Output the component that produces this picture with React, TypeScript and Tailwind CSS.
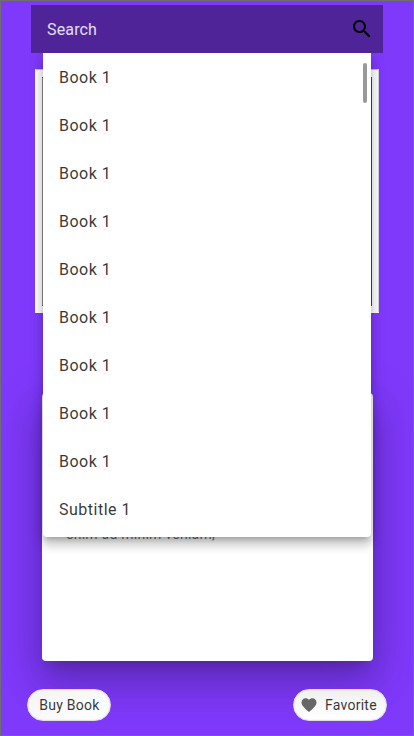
const books = Array.from({ length: 9 }, () => "Book 1");
const results = [...books, "Subtitle 1"];

function SearchBar() {
  return (
    <div className="relative z-10 ml-[30px] flex h-12 w-[352px] items-center justify-between bg-[#4f2499] pl-4 pr-[9px]">
      <span className="pt-0.5 text-base tracking-[0.15px] text-white/85">Search</span>
      <svg viewBox="0 0 24 24" className="h-6 w-6 fill-black">
        <path d="M15.5 14h-.79l-.28-.27C15.41 12.59 16 11.11 16 9.5 16 5.91 13.09 3 9.5 3S3 5.91 3 9.5 5.91 16 9.5 16c1.61 0 3.09-.59 4.23-1.57l.27.28v.79l5 4.99L20.49 19l-4.99-5zm-6 0C7.01 14 5 11.99 5 9.5S7.01 5 9.5 5 14 7.01 14 9.5 11.99 14 9.5 14z" />
      </svg>
      <Results />
    </div>
  );
}

function Results() {
  return (
    <div className="absolute left-3 top-12 h-[484px] w-[328px] rounded-b bg-white shadow-[0_5px_5px_-3px_rgba(0,0,0,0.2),0_8px_10px_1px_rgba(0,0,0,0.14),0_3px_14px_2px_rgba(0,0,0,0.12)] [clip-path:inset(0_-30px_-40px_-30px)]">
      <ul>
        {results.map((label, i) => (
          <li key={i} className="flex h-12 items-center pl-4 pt-0.5 text-base tracking-[0.5px] text-black/80">
            {label}
          </li>
        ))}
      </ul>
      <div className="absolute right-1 top-[10px] h-10 w-1 rounded-sm bg-[#999999]" />
    </div>
  );
}

function Cover() {
  return (
    <div className="ml-[34px] mt-4 flex h-[244px] w-[344px] border border-t-[#cdb4fb] border-r-[#d6d6e0] border-b-white border-l-white bg-white px-[6px] pb-[6px] pt-[7px]">
      <div className="flex-1 border border-[#444444] border-l-[#8a8a8a] bg-white" />
    </div>
  );
}

function DetailCard() {
  return (
    <div className="ml-[41px] mt-20 flex h-[268px] w-[331px] flex-col rounded bg-white px-6 shadow-[0_11px_15px_-7px_rgba(0,0,0,0.2),0_24px_38px_3px_rgba(0,0,0,0.14),0_9px_46px_8px_rgba(0,0,0,0.12)]">
      <p className="mt-[131px] text-sm leading-5 tracking-[0.25px] text-black/60">enim ad minim veniam,</p>
    </div>
  );
}

function Actions() {
  return (
    <div className="relative mt-7 flex justify-between pl-[26px] pr-[26px]">
      <button className="flex h-8 w-[84px] items-center justify-center rounded-full border border-[#dedede] bg-gradient-to-br from-[#f4f4f4] to-white pl-px text-sm tracking-[0.25px] text-black/80 shadow-[inset_0_0_2px_rgba(0,0,0,0.1)]">
        Buy Book
      </button>
      <button className="flex h-8 w-[94px] items-center rounded-full border border-[#dedede] bg-gradient-to-b from-[#f0f0f0] to-white pl-[6px] text-sm tracking-[0.25px] text-black/80 shadow-[inset_0_0_2px_rgba(0,0,0,0.1)]">
        <svg viewBox="0 0 24 24" className="mr-[7px] h-[18px] w-[18px] fill-[#666666]">
          <path d="M12 21.35l-1.45-1.32C5.4 15.36 2 12.28 2 8.5 2 5.42 4.42 3 7.5 3c1.74 0 3.41.81 4.5 2.09C13.09 3.81 14.76 3 16.5 3 19.58 3 22 5.42 22 8.5c0 3.78-3.4 6.86-8.55 11.54L12 21.35z" />
        </svg>
        Favorite
      </button>
    </div>
  );
}

export default function App() {
  return (
    <main className="h-[736px] w-[414px] overflow-hidden border border-[#6e6e6e] bg-[#7f39fb] pt-1 font-['Roboto',sans-serif]">
      <SearchBar />
      <Cover />
      <DetailCard />
      <Actions />
    </main>
  );
}
